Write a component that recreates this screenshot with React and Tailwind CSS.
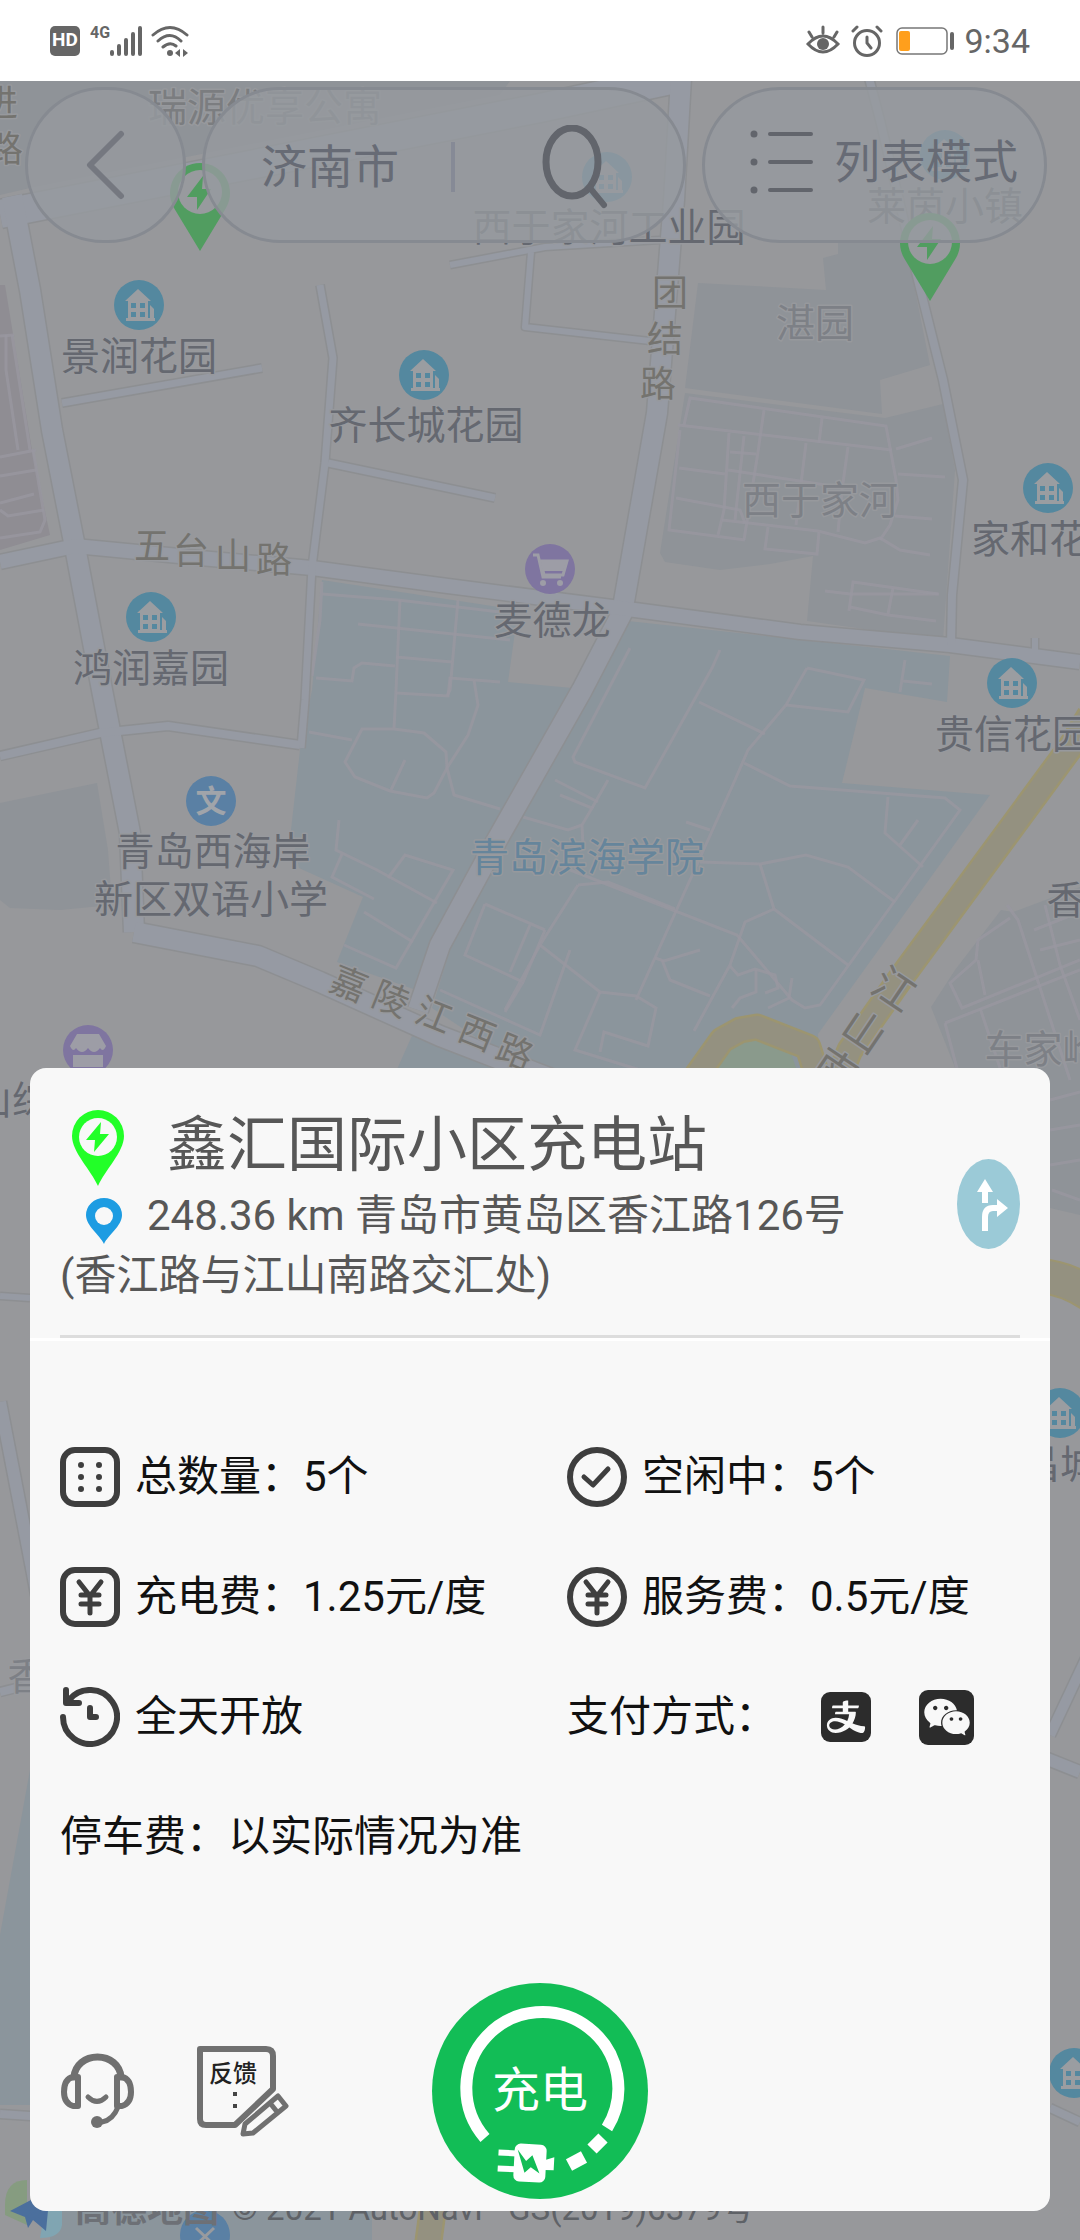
import React from "react";
import { AiFillAlipaySquare, AiFillWechat } from "react-icons/ai";

const roads = [
  { d: "M0 214 L540 108 L680 78", w: 28 },
  { d: "M12 196 L30 290 L52 430 L75 547 L102 690 L130 833 L134 932", w: 20 },
  { d: "M681 78 L674 200 L657 413 L636 533 L622 613 L582 690 L497 840 L440 945 L418 1010", w: 20 },
  { d: "M0 562 L75 546 L200 558 L312 568 L440 585 L620 608 L800 632 L950 645 L1080 662", w: 14 },
  { d: "M134 932 L258 956 L320 982 L440 1036 L580 1090", w: 20 },
  { d: "M320 285 L333 358 L325 463 L312 567 L305 700 L301 748", w: 7 },
  { d: "M62 403 L262 368", w: 7 },
  { d: "M328 463 L495 498", w: 7 },
  { d: "M450 265 L545 247 L660 240", w: 6 },
  { d: "M531 252 L525 327 L650 341", w: 6 },
  { d: "M0 756 L100 733 L168 726 L300 745", w: 8 },
  { d: "M869 78 L880 120 L918 280 L943 380 L963 480 L952 595 L951 645", w: 8 },
  { d: "M1035 638 L1035 655", w: 6 },
  { d: "M0 1296 L30 1298", w: 6 },
  { d: "M0 1402 L40 1610", w: 12 },
  { d: "M0 1692 L40 1682", w: 8 },
  { d: "M0 2114 L60 2118", w: 8 },
  { d: "M1040 1756 L1080 1772", w: 12 },
  { d: "M1050 1735 L1090 1650", w: 10 },
  { d: "M1050 2108 L1080 2122", w: 8 },
];

const lanes = [
  // left compound
  "M0 336 L14 335", "M6 335 L6 370 L18 450", "M12 335 L30 450", "M0 457 L36 450", "M0 476 L36 470",
  "M0 503 L34 494", "M33 450 L45 520 L40 532 L0 538", "M0 510 L8 516 L44 510",
  // village blocks
  "M684 425 L690 398 L886 426 L896 480 L898 500 L890 525 L880 540", "M678 425 L892 450", "M680 430 L669 530 L745 540",
  "M764 410 L758 452 L744 540", "M822 418 L819 443", "M806 443 L796 525", "M848 447 L842 490 L838 532",
  "M729 433 L724 510 L718 535", "M744 436 L735 520", "M730 452 L756 454", "M679 468 L725 474", "M728 470 L845 488",
  "M676 498 L740 510 L745 523", "M722 520 L818 531 L865 543 L880 538 L900 550 L930 555", "M768 527 L765 549 L817 554 L819 532",
  "M896 449 L932 438", "M898 474 L945 477", "M895 516 L932 519", "M825 591 L850 594 L939 594", "M849 611 L853 582 L938 594",
  "M850 607 L888 615 L936 621", "M893 588 L888 614",
  // campus west
  "M322 594 L398 600 L500 612", "M322 582 L320 620 L312 676", "M358 624 L510 640", "M400 600 L396 690 L394 728",
  "M458 600 L450 690 L447 696", "M396 657 L452 662", "M316 678 L352 681 L354 668 L362 663 L395 666", "M396 693 L448 696 L450 678 L500 682",
  "M474 680 L478 705 L468 735 L447 768 L454 795 L500 809", "M309 732 L352 740",
  "M362 729 L394 729 L424 733 L446 752 L447 768 L434 793 L427 798 L390 791 L355 777 L345 762 Z",
  "M405 760 L391 790", "M339 820 L336 850 L377 870 L437 903", "M342 854 L332 877 L374 899", "M388 878 L405 855 L453 870 L396 968 L344 945",
  "M364 912 L413 942", "M523 817 L568 830 L582 825",
  // campus east
  "M630 648 L573 757 L575 762 L645 788 L712 668 L720 650", "M699 702 L765 734", "M807 668 L786 705 L748 750 L735 780 L636 1000",
  "M807 668 L864 680 L848 712 L786 705", "M744 763 L790 786 L945 798 L960 810 L820 1005 L805 1008 L792 1000 L737 935 L560 866",
  "M888 797 L885 833 L923 867", "M918 820 L900 845", "M700 862 L760 864 L806 855 L848 867 L895 902", "M760 864 L774 909 L848 965",
  "M774 909 L745 922 L730 965 L694 1031", "M686 822 L710 830", "M578 885 L608 882 L675 909", "M578 885 L540 945 L505 1010",
  "M485 904 L545 930", "M485 904 L465 955 L523 982 L545 930", "M530 925 L510 972", "M523 982 L505 1012", "M440 990 L540 1035 L570 950",
  "M540 945 L600 992 L636 996 L656 1008 L648 1046 L604 1032 L600 1052", "M600 992 L575 1050 L640 1070",
  "M655 958 L664 961 L700 950", "M662 960 L670 980 L710 996", "M730 966 L738 975 L755 969 L775 975 L778 988 L765 993",
  "M756 970 L756 992 L740 998 L732 1008", "M792 978 L789 998 L768 1008", "M905 660 L900 692", "M903 681 L932 684",
  "M555 780 L598 802", "M560 795 L592 808 L582 825 L583 845", "M608 780 L592 808",
  // village south-east
  "M1007 905 L1018 920 L1070 1080", "M1010 918 L978 940 L976 960 L950 983 L962 1008 L1080 960", "M1045 905 L1060 965 L1080 1020",
  "M945 1023 L1080 970", "M945 1023 L960 1080", "M980 1008 L1000 1068", "M978 960 L985 995", "M1034 930 L1080 912", "M1040 950 L1080 940",
  "M1050 1100 L1080 1092", "M1050 1130 L1080 1125", "M1050 1165 L1080 1160", "M1052 1190 L1080 1200",
];

const places = [
  { text: "景润花园", x: 139, y: 370 },
  { text: "齐长城花园", x: 426, y: 439 },
  { text: "鸿润嘉园", x: 151, y: 682 },
  { text: "麦德龙", x: 552, y: 634 },
  { text: "家和花园", x: 1049, y: 553 },
  { text: "贵信花园", x: 1013, y: 748 },
  { text: "青岛西海岸", x: 213, y: 865 },
  { text: "新区双语小学", x: 211, y: 913 },
  { text: "西于家河工业园", x: 609, y: 241 },
  { text: "莱茵小镇", x: 945, y: 220 },
  { text: "瑞源优享公寓", x: 265, y: 121, fill: "#7b7d80" },
  { text: "湛园", x: 815, y: 337, fill: "#7d8086" },
  { text: "西于家河", x: 820, y: 514, fill: "#7d8086" },
  { text: "车家岭", x: 1043, y: 1063, fill: "#7d8086" },
  { text: "青岛滨海学院", x: 587, y: 871, fill: "#66859b" },
  { text: "香", x: 1066, y: 914 },
  { text: "山综", x: 12, y: 1114 },
  { text: "香", x: 27, y: 1690, fill: "#7d8086" },
  { text: "昌城", x: 1060, y: 1478 },
];

// text, x, y, rotation, size
const roadNames = [
  ["进", 0, 103], ["路", 5, 149],
  ["团", 670, 293], ["结", 665, 339], ["路", 658, 384],
  ["五", 152, 546], ["台", 191, 551], ["山", 233, 556], ["路", 274, 560],
  ["嘉", 349, 984, 22], ["陵", 391, 999, 22], ["江", 434, 1015, 22], ["西", 477, 1033, 22], ["路", 515, 1052, 22],
  ["江", 893, 991, 34, 42], ["山", 863, 1033, 34, 42], ["南", 834, 1072, 34, 42],
];

const House = ({ x, y }) => (
  <g transform={`translate(${x} ${y})`}>
    <circle r="25" fill="#54889f" />
    <path d="M-14 -4 L-1 -16 L12 -4 H9 V13 H-11 V-4Z M-13 13 H16 V16 H-13Z M11 0 L15 4 V13 H11Z" fill="#9a9da1" />
    <path d="M-8 -2h5v5h-5z M1 -2h5v5h-5z M-8 7h5v5h-5z M1 7h5v5h-5z" fill="#54889f" />
  </g>
);

const MapPin = ({ x, y }) => (
  <g transform={`translate(${x} ${y})`}>
    <path d="M0 59 L-26 16 A30 30 0 1 1 26 16Z" fill="#519d60" />
    <circle r="22" fill="#989a9e" />
    <path d="M3 -16 L-13 5 H-3 L-3 18 L11 -3 H2Z" fill="#519d60" />
  </g>
);

const MapView = () => (
  <svg
    className="absolute inset-0 h-full w-full"
    viewBox="0 81 1080 2159"
    preserveAspectRatio="xMidYMin slice"
    aria-hidden="true"
  >
    <rect y="0" width="1080" height="2240" fill="#97989b" />

    {/* blocks */}
    <g fill="#8f9398">
      <path d="M0 81 H510 L500 95 L30 188 L0 195Z" />
      <path d="M0 803 L97 783 L108 850 L112 905 L60 910 L10 908 L0 900Z" />
      <path d="M698 283 L826 290 L823 258 L838 254 V243 L905 240 L930 365 L880 380 L882 414 L685 388Z" />
      <path d="M685 393 L885 418 L943 404 L955 470 L943 640 L807 621 L813 556 L770 564 L720 570 L665 562 L660 553Z" />
      <path d="M1001 910 L1013 912 L1080 887 V1215 L1050 1208 L960 1080 L931 1007 L955 970Z" />
    </g>
    <path d="M0 285 H5 L32 450 L50 535 L0 550Z" fill="#8f8d93" />
    <g fill="#8b959c">
      <path d="M322 580 L518 610 L508 682 L572 688 L500 836 L430 960 L416 990 L337 962 L363 897 L299 868 L291 830 L300 750 L312 690Z" />
      <path d="M628 621 L950 656 L947 702 L865 688 L842 783 L990 795 L818 1034 L820 1080 H540 L432 1008 L450 950 L506 840 L590 690Z" />
      <path d="M415 1029 L540 1085 H390Z" />
      <path d="M30 1770 L0 1935 V2105 H40Z" />
      <path d="M50 2205 H372 V2240 H50Z" />
    </g>
    <g fill="none" stroke="#9897a0" strokeWidth="3" strokeOpacity=".8">
      {lanes.map((d) => (
        <path key={d} d={d} />
      ))}
    </g>

    {/* streets */}
    <g fill="none" stroke="#8d8f92" strokeLinejoin="round">
      {roads.map((r) => (
        <path key={r.d} d={r.d} strokeWidth={r.w + 3} />
      ))}
    </g>
    <g fill="none" stroke="#969aa3" strokeLinejoin="round">
      {roads.map((r) => (
        <path key={r.d} d={r.d} strokeWidth={r.w} />
      ))}
    </g>

    {/* highway and roundabout */}
    <path d="M702 1080 L733 1040 L760 1036 L790 1050 L800 1080Z" fill="#8a9a8c" />
    <g fill="none" strokeLinejoin="round">
      <path d="M1090 715 L1070 748 L903 975 L850 1050 L835 1085 M690 1085 L722 1040 L740 1030 L757 1027 L808 1047 L820 1085" stroke="#9c9570" strokeWidth="27" />
      <path d="M1090 715 L1070 748 L903 975 L850 1050 L835 1085 M690 1085 L722 1040 L740 1030 L757 1027 L808 1047 L820 1085" stroke="#949180" strokeWidth="22" />
      <path d="M1040 1276 Q1066 1278 1090 1294" stroke="#9c9570" strokeWidth="36" />
      <path d="M1040 1276 Q1066 1278 1090 1294" stroke="#949180" strokeWidth="32" />
      <path d="M434 2200 L428 2245" stroke="#9c9570" strokeWidth="28" />
      <path d="M434 2200 L428 2245" stroke="#949180" strokeWidth="23" />
    </g>

    {/* places */}
    <House x={139} y={305} />
    <House x={424} y={375} />
    <House x={151} y={617} />
    <House x={1048} y={488} />
    <House x={1012} y={683} />
    <House x={607} y={177} />
    <House x={945} y={155} />
    <House x={1060} y={1413} />
    <House x={1074} y={2073} />
    <g transform="translate(550 569)">
      <circle r="25" fill="#7f75a0" />
      <path d="M-17 -14 h5 l5 22 h18 M-9 -8 h26 l-4 14 h-19Z" fill="none" stroke="#9d9da6" strokeWidth="3" />
      <path d="M-9 -7 h25 l-3 9 h-20Z" fill="#9d9da6" />
      <circle cx="-7" cy="14" r="3" fill="#9d9da6" />
      <circle cx="10" cy="14" r="3" fill="#9d9da6" />
    </g>
    <g transform="translate(88 1050)">
      <circle r="25" fill="#7f75a0" />
      <path d="M-11 -16 H11 L18 -4 Q15 3 12 -2 Q6 6 0 -2 Q-6 6 -12 -2 Q-15 3 -18 -4Z M-15 5 H15 V17 H-15Z" fill="#9d9da6" />
    </g>
    <circle cx="211" cy="801" r="25" fill="#5a80a4" />
    <circle cx="205" cy="2235" r="25" fill="#5a80a4" />
    <path d="M196 2228 L215 2246 M214 2228 L195 2246" stroke="#989a9e" strokeWidth="3" />

    <g fontFamily="'Noto Sans CJK SC', sans-serif" textAnchor="middle" stroke="#97999d" strokeWidth="3" strokeLinejoin="round" style={{ paintOrder: "stroke" }}>
      <text x="211" y="812" fontSize="31" fontWeight="700" fill="#a0a4aa" stroke="none">文</text>
      {places.map((p) => (
        <text key={p.text + p.y} x={p.x} y={p.y} fontSize="39" fill={p.fill || "#656870"}>
          {p.text}
        </text>
      ))}
      {roadNames.map(([text, x, y, turn, size]) => (
        <text key={text + x} transform={`translate(${x} ${y}) rotate(${turn || 0})`} y="13" fontSize={size || 36} fill="#74736f">
          {text}
        </text>
      ))}
    </g>

    <MapPin x={200} y={192} />
    <MapPin x={930} y={242} />

    {/* provider mark */}
    <path d="M5 2205 Q5 2180 27 2180 V2225 L5 2215Z" fill="#869c80" />
    <path d="M62 2210 V2225 Q60 2238 40 2238 L45 2210Z" fill="#80a5b2" />
    <path d="M10 2211 L50 2190 L46 2231 L33 2220 L28 2228 L25 2217Z" fill="#4b6f9d" />
    <text x="75" y="2222" fontSize="36" fontWeight="700" fontFamily="'Noto Sans CJK SC', sans-serif" fill="#6d7076">高德地图</text>
    <text x="232" y="2220" fontSize="33" fontFamily="Roboto, 'Noto Sans CJK SC', sans-serif" fill="#5f6267">
      © 2021 AutoNavi - GS(2019)6379号
    </text>
  </svg>
);

const StatusBar = () => (
  <header className="flex h-[81px] items-center justify-between bg-white pr-[50px] pl-[50px] text-[#666]">
    <div className="flex items-center">
      <span className="flex h-[30px] w-[30px] items-center justify-center rounded-[5px] bg-[#666] text-[19px] font-bold text-white">HD</span>
      <span className="mb-4 ml-[10px] text-[16px] leading-4 font-bold">4G</span>
      <svg width="32" height="30" viewBox="0 0 32 30" fill="none" stroke="currentColor" strokeWidth="4" strokeLinecap="round" aria-hidden="true">
        <path d="M2 26v2M9 20v8M16 14v14M23 8v20M30 2v26" />
      </svg>
      <svg className="ml-[9px]" width="38" height="32" viewBox="0 0 38 32" fill="none" stroke="currentColor" strokeWidth="3" strokeLinecap="round" aria-hidden="true">
        <path d="M2 10 Q19 -5 36 10M7 16 Q19 5 30 16M12 22 Q19 16 25 21" />
        <circle cx="19" cy="28" r="3" fill="currentColor" stroke="none" />
        <path d="M24 28l5-4v8zM37 28l-5-4v8z" fill="currentColor" stroke="none" />
      </svg>
    </div>
    <div className="flex items-center">
      <svg width="34" height="32" viewBox="0 0 34 32" fill="none" stroke="currentColor" strokeWidth="3" strokeLinecap="round" aria-hidden="true">
        <path d="M2 19 Q17 3 32 19 Q17 35 2 19Z M17 2v6M3 7l3 5M31 7l-3 5" />
        <circle cx="17" cy="19" r="6" fill="currentColor" stroke="none" />
      </svg>
      <svg className="ml-[11px]" width="32" height="32" viewBox="0 0 32 32" fill="none" stroke="currentColor" strokeWidth="3" strokeLinecap="round" aria-hidden="true">
        <circle cx="16" cy="18" r="12.5" />
        <path d="M16 12v6l4 5M2 6l4-4M30 6l-4-4" />
      </svg>
      <svg className="ml-[13px]" width="60" height="30" viewBox="0 0 60 30" aria-hidden="true">
        <rect x="1" y="2" width="50" height="26" rx="5" fill="none" stroke="#777" strokeWidth="1.5" />
        <rect x="3" y="5" width="11" height="20" rx="2" fill="#ff9f1c" />
        <rect x="54" y="6" width="4" height="18" rx="2" fill="#666" />
      </svg>
      <time className="ml-2 text-[34px] leading-10">9:34</time>
    </div>
  </header>
);

const TopControls = () => (
  <nav className="relative flex gap-4 pt-[6px] pr-[33px] pl-[25px] text-[46px] text-[#676b75]">
    <button type="button" aria-label="返回" className="flex h-[156px] w-[161px] items-center justify-center rounded-full border-[3px] border-[#868a91] bg-[#969a9f]/80">
      <svg width="40" height="72" viewBox="0 0 40 72" fill="none" stroke="#757880" strokeWidth="6" strokeLinecap="round" strokeLinejoin="round">
        <path d="M35 5 L4 36 L35 67" />
      </svg>
    </button>
    <div className="flex h-[156px] flex-1 items-center rounded-full border-[3px] border-[#868a91] bg-[#969a9f]/80 pt-[4px] pl-[56px]">
      <button type="button">济南市</button>
      <span className="ml-[52px] h-[50px] w-1 bg-[#868a96]" />
      <button type="button" aria-label="搜索" className="ml-[87px]">
        <svg width="66" height="84" viewBox="0 0 66 84" fill="none" stroke="#62656c" strokeWidth="6" strokeLinecap="round">
          <ellipse cx="30" cy="37" rx="26" ry="34" strokeWidth="7" />
          <path d="M48 63 L62 80" />
        </svg>
      </button>
    </div>
    <button type="button" className="flex h-[156px] w-[345px] items-center rounded-full border-[3px] border-[#868a91] bg-[#969a9f]/80 pb-[6px] pl-[45px]">
      <svg width="64" height="64" viewBox="0 0 64 64" fill="none" stroke="#62656c" strokeWidth="4" strokeLinecap="round" aria-hidden="true">
        <path d="M20 4h41M20 32h41M20 60h41" />
        <path d="M4 4h0M4 32h0M4 60h0" strokeWidth="7" />
      </svg>
      <span className="ml-[20px] whitespace-nowrap">列表模式</span>
    </button>
  </nav>
);

const IconFrame = ({ round, children }) => (
  <svg className="h-[60px] w-[60px] shrink-0" viewBox="0 0 60 60" fill="none" stroke="#3e3e3e" strokeWidth="5" strokeLinecap="round" strokeLinejoin="round" aria-hidden="true">
    {round ? <circle cx="30" cy="30" r="27" strokeWidth="6" /> : <rect x="3" y="3" width="54" height="54" rx="12" strokeWidth="6" />}
    {children}
  </svg>
);

const yen = <path d="M19 15 L30 29 L41 15 M30 29 V46 M21 28 H39 M21 37 H39" />;

const Fact = ({ icon, label, value }) => (
  <div className="flex h-[60px] items-center gap-[15px] whitespace-nowrap">
    {icon}
    <p>
      {label}
      {value}
    </p>
  </div>
);

const StationInfo = () => (
  <div className="grid grid-cols-[507fr_453fr] gap-y-[60px] px-[30px] pt-[106px] text-[42px] leading-[60px] text-[#111]">
    <Fact
      icon={
        <IconFrame>
          <path d="M21 18h0M21 30h0M21 42h0M39 18h0M39 30h0M39 42h0" strokeWidth="6" />
        </IconFrame>
      }
      label="总数量："
      value="5个"
    />
    <Fact icon={<IconFrame round><path d="M17 30 L26 38 L41 22" /></IconFrame>} label="空闲中：" value="5个" />
    <Fact icon={<IconFrame>{yen}</IconFrame>} label="充电费：" value="1.25元/度" />
    <Fact icon={<IconFrame round>{yen}</IconFrame>} label="服务费：" value="0.5元/度" />
    <Fact
      icon={
        <svg className="h-[60px] w-[60px] shrink-0" viewBox="0 0 60 60" fill="none" stroke="#3e3e3e" strokeWidth="6" strokeLinecap="round" strokeLinejoin="round" aria-hidden="true">
          <path d="M3 30 A27 27 0 1 0 9 13" />
          <path d="M6 3 V16 H19" />
          <path d="M6 7 L15 16 H6Z" fill="#3e3e3e" strokeWidth="2" />
          <path d="M30 21 V30 H36" />
        </svg>
      }
      label="全天开放"
    />
    <div className="flex h-[60px] items-center whitespace-nowrap">
      <p>支付方式：</p>
      <span className="ml-[44px] flex h-[50px] w-[50px] items-center justify-center overflow-hidden rounded-[9px]">
        <AiFillAlipaySquare className="h-[68px] w-[68px] shrink-0 text-[#2c2c2c]" />
      </span>
      <span className="ml-[48px] flex h-[55px] w-[55px] items-center justify-center rounded-[9px] bg-[#2c2c2c]">
        <AiFillWechat className="h-[52px] w-[52px] text-[#f8f8f8]" />
      </span>
    </div>
    <p className="col-span-2">停车费：以实际情况为准</p>
  </div>
);

const StationHeader = () => (
  <div className="border-b-[3px] border-white px-[30px] pt-[38px]">
    <div className="flex items-center justify-between border-b-[3px] border-[#ddd] pb-[29px] text-[#575757]">
      <div>
        <h1 className="flex h-20 items-center text-[60px] font-normal">
          <svg className="mt-[3px] ml-[11px]" width="54" height="76" viewBox="0 0 54 76" aria-hidden="true">
            <path d="M27 76 C20 60 1 42 1 26 A26 26 0 0 1 53 26 C53 42 34 60 27 76Z" fill="#22ff28" />
            <circle cx="27" cy="27" r="19" fill="#f8f8f8" />
            <path d="M30 12 L15 30 H24 L23 42 L38 24 H29Z" fill="#22ff28" />
          </svg>
          <span className="ml-[42px]">鑫汇国际小区充电站</span>
        </h1>
        <p className="text-[42px] leading-[60px]">
          <svg className="mr-[25px] ml-[26px] inline-block align-[-14px]" width="36" height="46" viewBox="0 0 36 46" aria-hidden="true">
            <path d="M18 46 C14 37 0 28 0 17 A18 17 0 0 1 36 17 C36 28 22 37 18 46Z" fill="#1d9ce2" />
            <circle cx="18" cy="18" r="9" fill="#f8f8f8" />
          </svg>
          248.36 km 青岛市黄岛区香江路126号
          <br />
          (香江路与江山南路交汇处)
        </p>
      </div>
      <button type="button" aria-label="导航" className="mb-1 shrink-0">
        <svg width="63" height="90" viewBox="0 0 63 90">
          <ellipse cx="31.5" cy="45" rx="31.5" ry="45" fill="#9bcad7" />
          <path d="M28 72 V58 Q28 49 36 49 H42 M28 44 V28" fill="none" stroke="#fff" strokeWidth="6" />
          <path d="M20 33 L28 20 L36 33Z M40 40 L51 49 L40 58Z" fill="#fff" />
        </svg>
      </button>
    </div>
  </div>
);

const StationActions = () => (
  <div className="mt-[116px] grid grid-cols-[1fr_auto_1fr] items-center px-[30px] pb-3">
    <div className="flex items-center gap-[62px]">
      <button type="button" aria-label="客服">
        <svg width="75" height="76" viewBox="0 0 75 76" fill="none" stroke="#707070" strokeWidth="7" strokeLinecap="round" strokeLinejoin="round">
          <path d="M14 24 C15 12 25 4 37.500 4 C50 4 60 12 61 24" />
          <path d="M18 24 V53 H13 Q4 50 4 39 Q4 26 13 24Z M57 24 V53 H62 Q71 50 71 39 Q71 26 62 24Z" strokeWidth="6" />
          <path d="M28 44 Q37 53 46 44" strokeWidth="5" />
          <path d="M58 54 Q53 67 42 69" strokeWidth="5" />
          <circle cx="37" cy="69" r="6" fill="#707070" stroke="none" />
        </svg>
      </button>
      <button type="button">
        <svg width="92" height="92" viewBox="0 0 92 92" fill="none" stroke="#707070" strokeWidth="6" strokeLinejoin="round">
          <path d="M3 4 H69 Q76 4 76 11 V44 L38 80 H9 Q3 80 3 74Z" />
          <path d="M81 51 L89 61 L56 88 L46 89 L48 79Z M73 58 L81 68" strokeWidth="5" />
          <path d="M38 47v4M38 59v4" stroke="#444" strokeWidth="4" />
          <text x="36" y="37" fontSize="24" fontWeight="500" textAnchor="middle" fill="#222" stroke="none" fontFamily="'Noto Sans CJK SC', sans-serif">反馈</text>
        </svg>
      </button>
    </div>
    <button type="button" className="relative flex h-[216px] w-[216px] items-center justify-center rounded-full bg-[#12bd56] text-[48px] text-white">
      <svg className="absolute inset-0" width="216" height="216" viewBox="0 0 216 216" fill="none" stroke="#fff" strokeWidth="12" aria-hidden="true">
        <path d="M53 155 A76 76 0 1 1 175 145" />
        <path d="M171 155 L160 166 M152 174 L137 182" strokeWidth="13" />
        <g transform="rotate(3 96 180)" stroke="none" fill="#fff">
          <rect x="82" y="161" width="32" height="38" rx="6" />
          <path d="M66 168 h18 v6 h-18z M66 184 h18 v6 h-18z M113 176 l9 -3 v13 l-9 0z" />
          <path d="M85 167 L94 178 L100 172 L108 190 L99 184 L93 190Z" fill="#12bd56" />
        </g>
      </svg>
      <span className="relative">充电</span>
    </button>
  </div>
);

export default function App() {
  return (
    <div className="flex min-h-screen flex-col font-['Roboto','Noto_Sans_CJK_SC',sans-serif]">
      <StatusBar />
      <main className="relative flex flex-1 flex-col overflow-hidden bg-[#97989b]">
        <MapView />
        <TopControls />
        <section className="relative mx-[30px] mt-auto mb-[29px] rounded-2xl bg-[#f8f8f8]">
          <StationHeader />
          <StationInfo />
          <StationActions />
        </section>
      </main>
    </div>
  );
}
